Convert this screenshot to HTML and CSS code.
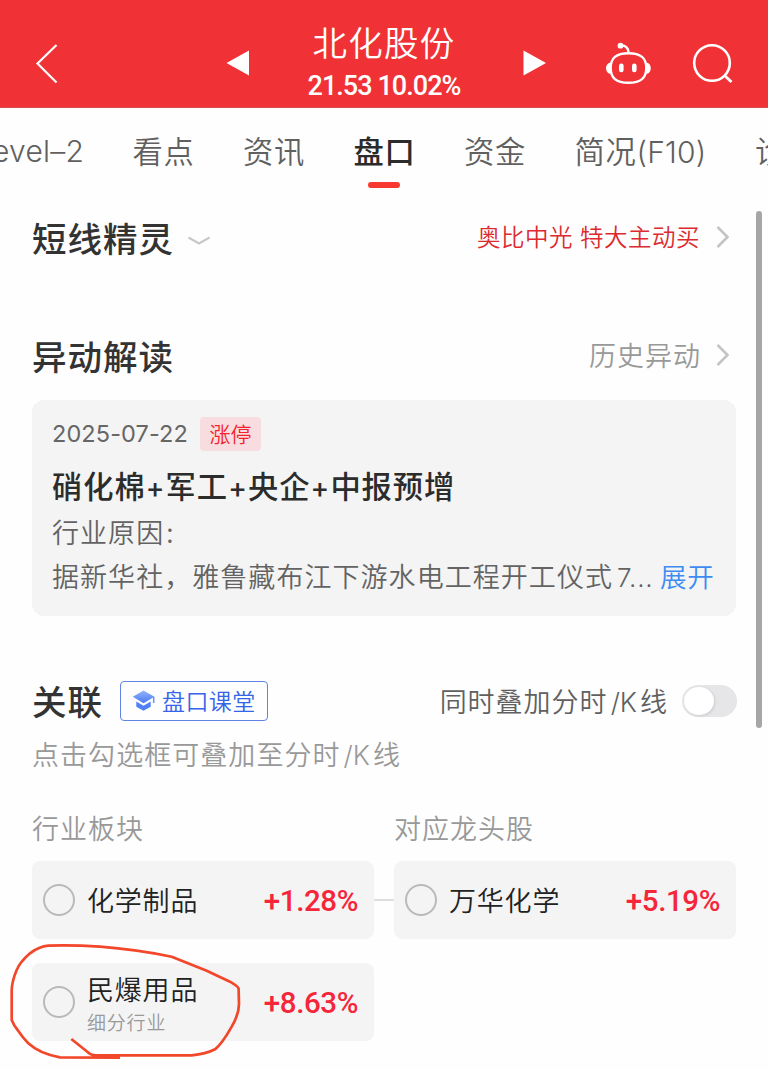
FILE: index.html
```html
<!DOCTYPE html>
<html lang="zh-CN">
<head>
<meta charset="utf-8">
<title>北化股份</title>
<link rel="stylesheet" href="styles.css">
</head>
<body>
<div class="app">
  <header class="topbar">
    <svg class="icon-back" width="24" height="42" viewBox="0 0 24 42"><path d="M21.500 2 2.500 20.500 21.500 39.500" fill="none" stroke="#fff" stroke-width="2.200"/></svg>
    <svg class="icon-prev" width="24" height="26" viewBox="0 0 24 26"><path d="M23 .5V25.500L.5 13Z" fill="#fff"/></svg>
    <div class="stock">
      <h1 class="stock-name">北化股份</h1>
      <div class="stock-quote">21.53 10.02%</div>
    </div>
    <svg class="icon-next" width="24" height="26" viewBox="0 0 24 26"><path d="M.5 .5V25.500L23 13Z" fill="#fff"/></svg>
    <svg class="icon-robot" width="48" height="44" viewBox="0 0 48 44"><g fill="none" stroke="#fff" stroke-width="2.400"><path d="M24.500 11.200C37 11.200 42.300 16 42.300 26S37 40.800 24.500 40.800 6.700 36 6.700 26 12 11.200 24.500 11.200Z"/><path d="M16.700 3.600C21.500 3.200 24.300 6 24.600 10.500" stroke-width="2.400"/></g><circle cx="16.500" cy="3.700" r="2.900" fill="#fff"/><path d="M6.500 20.500C.5 21.500 .5 31 6.500 32ZM42.500 20.500C48.200 21.500 48.200 31 42.500 32Z" fill="#fff"/><rect x="15" y="21.600" width="4.600" height="8.600" rx="2.200" fill="#fff"/><rect x="28" y="21.600" width="4.600" height="8.600" rx="2.200" fill="#fff"/></svg>
    <svg class="icon-search" width="42" height="42" viewBox="0 0 42 42"><circle cx="20" cy="20" r="17.800" fill="none" stroke="#fff" stroke-width="2.600"/><path d="M32 32 39.500 39" stroke="#fff" stroke-width="2.800"/></svg>
  </header>

  <nav class="tabs">
    <a class="tab tab-first"><span class="latin">Level–2</span></a>
    <a class="tab">看点</a>
    <a class="tab">资讯</a>
    <a class="tab tab-active">盘口</a>
    <a class="tab">资金</a>
    <a class="tab">简况<span class="latin latin-f10">(F10)</span></a>
    <a class="tab">诊股</a>
  </nav>

  <main class="content">
    <section class="row-head head-sprite">
      <h2 class="title">短线精灵</h2>
      <svg class="chev-down" width="24" height="10" viewBox="0 0 24 10"><path d="M1.500 1.500 12 7.500 22.500 1.500" fill="none" stroke="#c8c8c8" stroke-width="2.200"/></svg>
      <span class="link link-red">奥比中光<span class="gap"></span>特大主动买</span>
      <svg class="chev" width="14" height="24" viewBox="0 0 14 24"><path d="M1.500 2 11.500 12 1.500 22" fill="none" stroke="#c4c4c4" stroke-width="2.600"/></svg>
    </section>

    <section class="row-head head-move">
      <h2 class="title">异动解读</h2>
      <span class="link link-grey">历史异动</span>
      <svg class="chev" width="14" height="24" viewBox="0 0 14 24"><path d="M1.500 2 11.500 12 1.500 22" fill="none" stroke="#c4c4c4" stroke-width="2.600"/></svg>
    </section>

    <article class="card">
      <div class="card-meta"><time class="date">2025-07-22</time><span class="tag">涨停</span></div>
      <h3 class="card-title">硝化棉<i class="plus">+</i>军工<i class="plus">+</i>央企<i class="plus">+</i>中报预增</h3>
      <p class="card-line">行业原因<span class="colon">:</span></p>
      <p class="card-line card-last"><span class="excerpt">据新华社，雅鲁藏布江下游水电工程开工仪式<span class="seven">7...</span></span><a class="expand">展开</a></p>
    </article>

    <section class="row-head head-link">
      <h2 class="title">关联</h2>
      <a class="course">
        <svg width="24" height="22" viewBox="0 0 24 22"><defs><linearGradient id="cap" x1="0" y1="0" x2="0" y2="1"><stop offset="0" stop-color="#93b3fb"/><stop offset="1" stop-color="#4a7af4"/></linearGradient></defs><path d="M11.500 .5 22.500 6.800 11.500 13.200 .8 6.800Z" fill="url(#cap)"/><path d="M4.300 11.500 11.500 15.700 18.700 11.500V16.800L11.500 20.800 4.300 16.800Z" fill="#5080f6"/><path d="M21.700 7V13" stroke="#6d95f8" stroke-width="1.600"/></svg>
        <span>盘口课堂</span>
      </a>
      <span class="overlay-label">同时叠加分时<span class="latin-k">/K</span>线</span>
      <span class="switch"><span class="knob"></span></span>
    </section>
    <p class="hint">点击勾选框可叠加至分时<span class="latin-k">/K</span>线</p>

    <div class="columns">
      <div class="column">
        <h4 class="col-title">行业板块</h4>
        <div class="item item-linked"><span class="radio"></span><span class="name">化学制品</span><span class="pct">+1.28%</span></div>
        <div class="item"><span class="radio"></span><span class="names"><span class="name">民爆用品</span><span class="sub">细分行业</span></span><span class="pct">+8.63%</span>
          <svg class="marker" width="242" height="118" viewBox="0 0 242 118"><path d="M71.300 95 87.300 107.700Q91 111.300 96 111.300H191.700Q206 110 215 105.300Q222 100 231.700 82.700Q239 70 239 60L238.600 44.500Q238 42.500 230 37.700L206.700 26.700 171.700 12.700Q136 5.500 100 2.700Q72 .9 48.300 1.700Q39 2.500 30 9.300Q20 18 16.700 26Q12 37 11.700 46V76Q14 82 18 86.500Q23 94 28.300 99.300Q40 110 60 113.300L120 113.700" fill="none" stroke="#f2472a" stroke-width="2.700" stroke-linejoin="round"/></svg>
        </div>
      </div>
      <div class="column">
        <h4 class="col-title">对应龙头股</h4>
        <div class="item"><span class="radio"></span><span class="name">万华化学</span><span class="pct">+5.19%</span></div>
      </div>
    </div>
  </main>
  <div class="scrollbar"></div>
</div>
</body>
</html>
```
FILE: styles.css
```css
* { box-sizing: border-box; margin: 0; padding: 0; }
body { background: #fefefe; font-family: "Noto Sans CJK SC", sans-serif; color: #333; }
.app { position: relative; width: 768px; height: 1070px; overflow: hidden; white-space: nowrap; }
svg { display: block; flex: none; }

.topbar { display: flex; height: 108px; background: #f03236; color: #fff; align-items: flex-start; border-bottom: 1px solid #d94a4c; }
.icon-back { margin: 43px 0 0 35px; }
.icon-prev { margin: 50px 0 0 167px; }
.stock { width: 164px; margin: 19px 0 0 52px; text-align: center; }
.stock-name { font-size: 34.500px; font-weight: 350; line-height: 44px; letter-spacing: 1.300px; }
.stock-quote { font: 500 27px/36px Roboto, sans-serif; letter-spacing: -.95px; margin-top: 5px; }
.icon-next { margin: 50px 0 0 57px; }
.icon-robot { margin: 42px 0 0 57px; }
.icon-search { margin: 43px 0 0 40px; }

.tabs { display: flex; gap: 48.500px; height: 92px; padding-top: 20px; }
.tab { flex: none; position: relative; font-size: 30.300px; font-weight: 350; line-height: 44px; letter-spacing: .7px; color: #606060; height: 60px; }
.tab-first { width: 84px; display: flex; justify-content: flex-end; line-height: 46px; }
.latin { font-family: Inter, sans-serif; font-size: 30px; font-weight: 350; letter-spacing: .2px; }
.latin-f10 { letter-spacing: .2px; }
.tab-active { color: #2b2b2b; font-weight: 500; }
.tab-active::after { content: ""; position: absolute; left: 14px; top: 54px; width: 32px; height: 6px; border-radius: 3px; background: #f8392f; }

.content { padding: 0 32px; }
.row-head { display: flex; align-items: center; height: 48px; }
.title { font-size: 34.500px; font-weight: 500; line-height: 48px; letter-spacing: 1px; }
.head-sprite { margin-top: 13px; }
.head-move { margin-top: 70px; }
.chev-down { margin: 8px 0 0 13px; }
.link { margin-left: auto; font-weight: 350; }
.link-red { font-size: 23.500px; letter-spacing: .5px; color: #dc2a2e; position: relative; left: -1px; top: -1px; }
.gap { display: inline-block; width: 7px; }
.link-grey { font-size: 27px; letter-spacing: 1px; color: #999; position: relative; top: -1px; }
.chev { margin: 0 6px 0 15px; }

.card { height: 216px; margin-top: 21px; padding: 17px 20px 0; border-radius: 12px; background: #f4f4f4; }
.card-meta { display: flex; align-items: center; height: 34px; }
.date { font: 400 23.500px/34px Inter, sans-serif; color: #666; width: 148px; letter-spacing: .1px; }
.tag { width: 61px; height: 34px; border-radius: 4px; background: #f8dde0; color: #f5222d; font-size: 21px; font-weight: 350; line-height: 32px; text-align: center; }
.card-title { font-size: 30.300px; font-weight: 500; line-height: 44px; margin-top: 12px; letter-spacing: .9px; color: #2c2c2c; }
.plus { font: 500 28px/30px Inter, sans-serif; display: inline-block; width: 20px; text-align: center; }
.card-line { font-size: 27px; font-weight: 350; line-height: 44px; letter-spacing: 1.050px; color: #636363; margin-top: 3px; }
.card-last { display: flex; margin-top: 0; }
.colon { margin-left: 2px; }
.excerpt { width: 608px; }
.seven { font-family: Inter, sans-serif; font-size: 26px; margin-left: 4px; letter-spacing: .8px; }
.expand { color: #3d8cf2; font-size: 26.500px; letter-spacing: .8px; }

.head-link { margin-top: 61px; }
.head-link .title { position: relative; top: -1px; }
.course { display: flex; align-items: center; width: 148px; height: 40px; margin-left: 17px; padding-left: 11px; border: 1px solid #5f84e4; border-radius: 4px; color: #3563e9; font-size: 23px; line-height: 36px; letter-spacing: .4px; font-weight: 350; }
.course span { margin: -2px 0 0 6px; }
.overlay-label { margin: -1px -1px 0 auto; font-size: 27px; font-weight: 350; letter-spacing: 1px; color: #606060; }
.latin-k { font-family: Inter, sans-serif; font-size: 26.500px; font-weight: 350; letter-spacing: 0; margin: 0 3px; }
.switch { width: 55px; height: 32px; margin-left: 15px; margin-right: -1px; border-radius: 16px; background: #e6e6e8; padding: 2px; }
.knob { display: block; width: 30px; height: 28px; border-radius: 50%; background: #fff; box-shadow: 1px 1px 3px rgba(0,0,0,.12); }
.hint { font-size: 27px; font-weight: 350; line-height: 40px; height: 40px; margin-top: 9px; letter-spacing: 1.050px; color: #999; }

.columns { display: grid; grid-template-columns: 342px 342px; gap: 20px; margin-top: 34px; }
.column { display: flex; flex-direction: column; }
.col-title { font-size: 27px; font-weight: 350; line-height: 40px; height: 53px; letter-spacing: 1px; color: #999; }
.item { position: relative; display: flex; align-items: center; height: 78px; border-radius: 8px; background: #f4f4f4; padding: 0 16px 0 11px; margin-bottom: 24px; }
.item-linked::after { content: ""; position: absolute; left: 342px; top: 38px; width: 20px; height: 2px; background: #dedede; }
.radio { flex: none; width: 32px; height: 32px; border: 2px solid #b9b9b9; border-radius: 50%; margin-right: 12px; }
.name { font-size: 27px; line-height: 36px; letter-spacing: .8px; font-weight: 350; color: #222; display: block; }
.names { display: block; margin-top: 3px; }
.sub { display: block; font-size: 19px; font-weight: 350; line-height: 30px; letter-spacing: .8px; color: #999; }
.pct { margin: 2px 0 0 auto; font: 500 29.500px/40px Roboto, sans-serif; letter-spacing: -.4px; color: #f5263a; }
.marker { position: absolute; left: -32px; top: -19px; }

.scrollbar { position: absolute; left: 756px; top: 211px; width: 6px; height: 517px; border-radius: 3px; background: #a6a6a6; }
```
